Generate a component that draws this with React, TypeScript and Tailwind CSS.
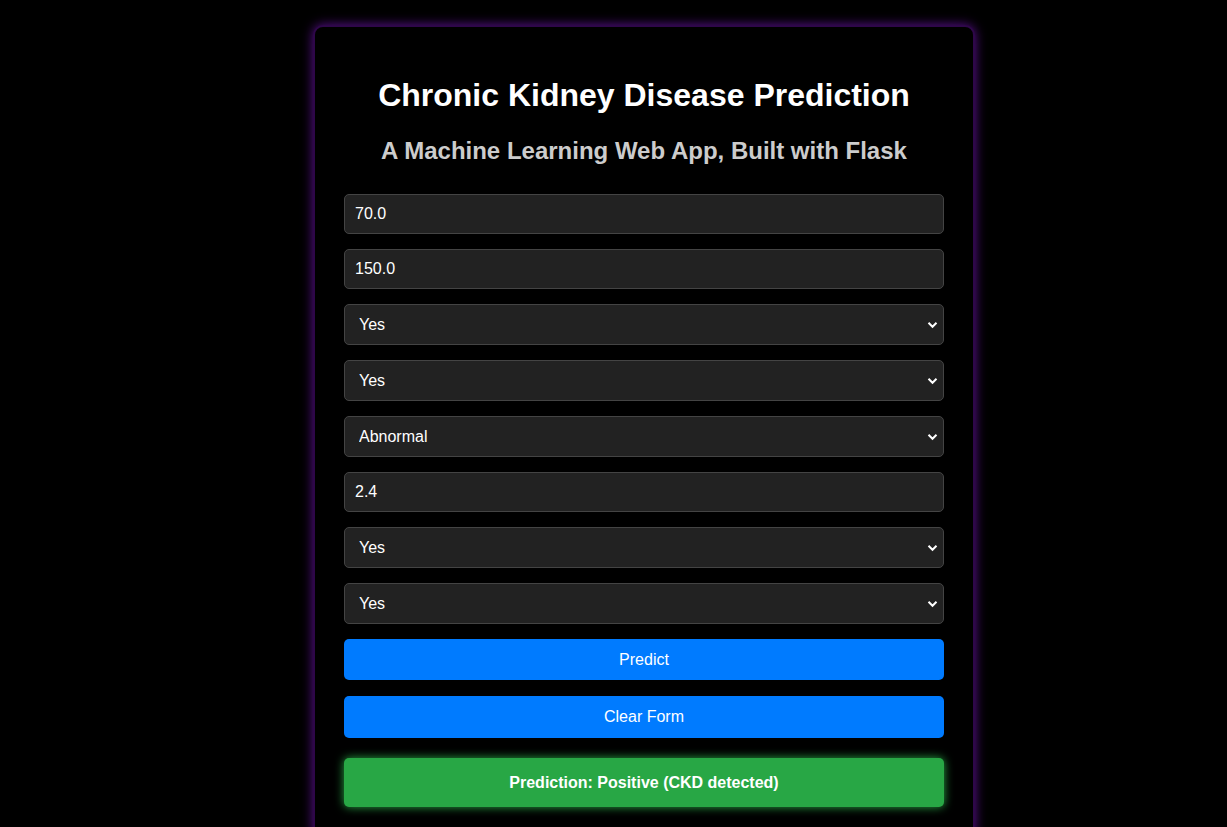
import { useState } from 'react';

const fieldCls =
  'block w-full h-[40px] rounded-[5px] border border-[#444] bg-[#222] px-[10px] text-[16px] text-white outline-none';

function Select({ value, options }: { value: string; options: string[] }) {
  const [v, setV] = useState(value);
  return (
    <div className="relative">
      <select
        value={v}
        onChange={(e) => setV(e.target.value)}
        className={`${fieldCls} h-[41px] appearance-none pl-[14px]`}
      >
        {options.map((o) => (
          <option key={o}>{o}</option>
        ))}
      </select>
      {/* chevron */}
      <svg
        className="pointer-events-none absolute right-[6px] top-1/2 -translate-y-1/2"
        width="11"
        height="8"
        viewBox="0 0 11 8"
        fill="none"
      >
        <path d="M1.5 1.8 L5.5 5.8 L9.5 1.8" stroke="white" strokeWidth="2" />
      </svg>
    </div>
  );
}

export default function App() {
  const [age, setAge] = useState('70.0');
  const [bgr, setBgr] = useState('150.0');
  const [sc, setSc] = useState('2.4');

  return (
    <div className="min-h-[827px] bg-black font-['Liberation_Sans',Arial,sans-serif]">
      <div className="pt-[25px]">
        <div className="ml-[313px] w-[662px] rounded-[10px] border-2 border-[#2e0749] bg-black px-[29px] pb-[30px] pt-[28px] shadow-[0_0_12px_#5a0f8f]">
          <h1 className="mt-[22px] text-center text-[32px] font-bold leading-[37px] text-white">
            Chronic Kidney Disease Prediction
          </h1>
          <h2 className="mt-[23px] text-center text-[24px] font-bold leading-[28px] text-[#cccccc]">
            A Machine Learning Web App, Built with Flask
          </h2>

          <form className="mt-[29px] flex flex-col gap-[15px]" onSubmit={(e) => e.preventDefault()}>
            <input className={fieldCls} value={age} onChange={(e) => setAge(e.target.value)} />
            <input className={fieldCls} value={bgr} onChange={(e) => setBgr(e.target.value)} />
            <Select value="Yes" options={['Yes', 'No']} />
            <Select value="Yes" options={['Yes', 'No']} />
            <Select value="Abnormal" options={['Abnormal', 'Normal']} />
            <input className={fieldCls} value={sc} onChange={(e) => setSc(e.target.value)} />
            <Select value="Yes" options={['Yes', 'No']} />
            <Select value="Yes" options={['Yes', 'No']} />
            <button className="h-[41px] rounded-[5px] bg-[#007bff] text-[16px] text-white">Predict</button>
            <button type="button" className="mt-[1px] h-[42px] rounded-[5px] bg-[#007bff] text-[16px] text-white">
              Clear Form
            </button>
          </form>

          <div className="mt-[20px] flex h-[49px] items-center justify-center rounded-[5px] bg-[#28a745] text-[16px] font-bold text-white shadow-[0_0_10px_#28a745]">
            Prediction: Positive (CKD detected)
          </div>
        </div>
      </div>
    </div>
  );
}
